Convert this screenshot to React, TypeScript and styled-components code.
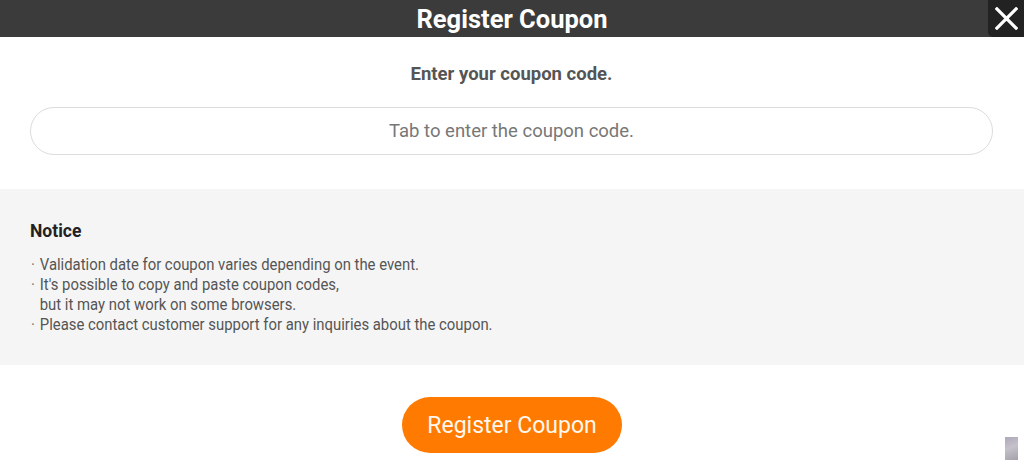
import React from 'react';
import styled, { createGlobalStyle } from 'styled-components';

const GlobalStyle = createGlobalStyle`
  html, body {
    margin: 0;
    padding: 0;
    background: #ffffff;
    font-family: Roboto, "Liberation Sans", Arial, sans-serif;
  }
`;

const notices = [
  'Validation date for coupon varies depending on the event.',
  "It's possible to copy and paste coupon codes,\nbut it may not work on some browsers.",
  'Please contact customer support for any inquiries about the coupon.',
];

const App: React.FC = () => {
  return (
    <Page>
      <GlobalStyle />
      <Header>
        <Title>Register Coupon</Title>
        <CloseButton aria-label="close">
          <svg width="23" height="23" viewBox="0 0 24 24">
            <path d="M2 2 L22 22 M22 2 L2 22" stroke="#ffffff" strokeWidth="3.4" strokeLinecap="square" />
          </svg>
        </CloseButton>
      </Header>

      <InputSection>
        <Prompt>Enter your coupon code.</Prompt>
        <CodeInput placeholder="Tab to enter the coupon code." />
      </InputSection>

      <NoticeBox>
        <NoticeTitle>Notice</NoticeTitle>
        <NoticeList>
          {notices.map((text) => (
            <NoticeItem key={text}>{text}</NoticeItem>
          ))}
        </NoticeList>
      </NoticeBox>

      <Footer>
        <SubmitButton>Register Coupon</SubmitButton>
        <Thumb />
      </Footer>
    </Page>
  );
};

const Page = styled.div`
  width: 1024px;
  height: 471px;
  overflow: hidden;
  display: flex;
  flex-direction: column;
`;

const Header = styled.div`
  position: relative;
  height: 37px;
  background: #3b3b3b;
  display: flex;
  align-items: center;
  justify-content: center;
`;

const Title = styled.h1`
  margin: 0;
  color: #ffffff;
  font-size: 25.5px;
  font-weight: 700;
`;

const CloseButton = styled.button`
  position: absolute;
  top: 0;
  right: 0;
  width: 36px;
  height: 37px;
  padding: 0;
  border: none;
  border-radius: 0 0 0 5px;
  background: #222222;
  display: flex;
  align-items: center;
  justify-content: center;
`;

const InputSection = styled.div`
  display: flex;
  flex-direction: column;
  align-items: center;
  padding: 26px 31px 34px 30px;
`;

const Prompt = styled.div`
  color: #555555;
  font-size: 18.5px;
  font-weight: 700;
  line-height: 22px;
  margin-bottom: 22px;
`;

const CodeInput = styled.input`
  box-sizing: border-box;
  width: 100%;
  height: 48px;
  border: 1px solid #dcdcdc;
  border-radius: 24px;
  background: #ffffff;
  text-align: center;
  font-family: inherit;
  font-size: 18.5px;
  outline: none;

  &::placeholder {
    color: #777777;
  }
`;

const NoticeBox = styled.div`
  background: #f5f5f5;
  height: 176px;
  box-sizing: border-box;
  padding: 31px 30px 0 31px;
`;

const NoticeTitle = styled.div`
  margin-left: -1px;
  color: #222222;
  font-size: 17.5px;
  font-weight: 700;
  line-height: 22px;
  margin-bottom: 12px;
`;

const NoticeList = styled.ul`
  margin: 0;
  padding: 0;
  list-style: none;
  transform: scaleX(0.875);
  transform-origin: left top;
`;

const NoticeItem = styled.li`
  position: relative;
  padding-left: 10px;
  color: #555555;
  font-size: 17px;
  line-height: 20px;
  white-space: pre-line;

  &::before {
    content: '·';
    position: absolute;
    left: 0;
    top: 0;
    color: #777777;
  }
`;

const Footer = styled.div`
  position: relative;
  flex: 1;
  display: flex;
  justify-content: center;
  padding-top: 32px;
`;

const SubmitButton = styled.button`
  width: 220px;
  height: 56px;
  border: none;
  border-radius: 28px;
  background: #ff7a00;
  color: #fff8ee;
  font-family: inherit;
  font-size: 23px;
  font-weight: 400;
  cursor: pointer;
`;

const Thumb = styled.div`
  position: absolute;
  right: 6px;
  top: 72px;
  width: 13px;
  height: 23px;
  background: linear-gradient(160deg, #9a93a6 0%, #b7b2bd 45%, #8f8a97 100%);
  opacity: 0.8;
`;

export default App;
